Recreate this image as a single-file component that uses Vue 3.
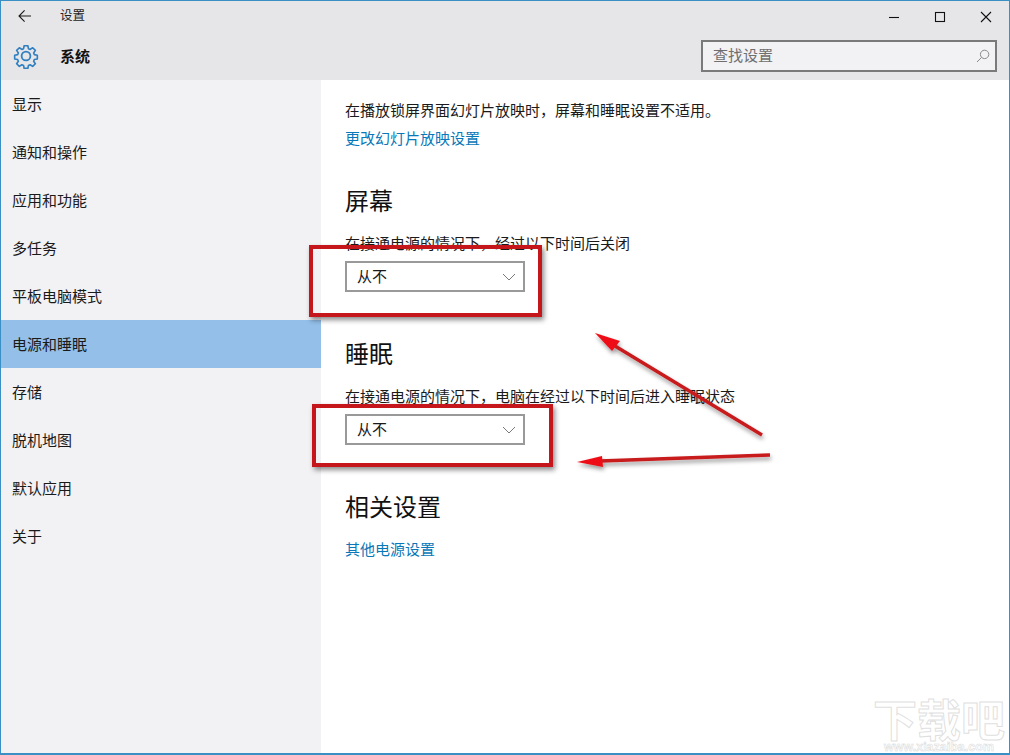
<script setup>
const navItems = ['显示', '通知和操作', '应用和功能', '多任务', '平板电脑模式', '电源和睡眠', '存储', '脱机地图', '默认应用', '关于']
const activeItem = '电源和睡眠'
const sections = [
  { title: '屏幕', caption: '在接通电源的情况下，经过以下时间后关闭', value: '从不' },
  { title: '睡眠', caption: '在接通电源的情况下，电脑在经过以下时间后进入睡眠状态', value: '从不' }
]
</script>

<template>
  <div class="window">
    <header class="header">
      <div class="titlebar">
        <button class="back" aria-label="返回">
          <svg width="14" height="14" viewBox="0 0 14 14" fill="none" stroke="#1a1a1a" stroke-width="1.1">
            <path d="M13 7H1.2M6.6 1.4 1 7l5.6 5.6" />
          </svg>
        </button>
        <span class="app-title">设置</span>
        <div class="controls">
          <span class="control">
            <svg width="12" height="12" viewBox="0 0 12 12" fill="none" stroke="#111" stroke-width="1.1"><path d="M1 6.5h10" /></svg>
          </span>
          <span class="control">
            <svg width="12" height="12" viewBox="0 0 12 12" fill="none" stroke="#111" stroke-width="1.1"><rect x="1.5" y="1.5" width="9" height="9" /></svg>
          </span>
          <span class="control">
            <svg width="12" height="12" viewBox="0 0 12 12" fill="none" stroke="#111" stroke-width="1.1"><path d="M1 1l10 10M11 1 1 11" /></svg>
          </span>
        </div>
      </div>
      <div class="pagebar">
        <svg class="gear" width="26" height="26" viewBox="0 0 26 26" fill="none" stroke="#2f7fc1" stroke-width="1.8" stroke-linejoin="round">
          <path d="M10.9 1.6h4.2l.6 3.3 1.9.8 2.8-1.9 3 3-1.9 2.8.8 1.9 3.3.6v4.2l-3.3.6-.8 1.9 1.9 2.8-3 3-2.8-1.9-1.9.8-.6 3.3h-4.2l-.6-3.3-1.9-.8-2.8 1.9-3-3 1.9-2.8-.8-1.9-3.3-.6v-4.2l3.3-.6.8-1.9-1.9-2.8 3-3 2.8 1.9 1.9-.8z" transform="translate(1.3 1.3) scale(.9)" />
          <circle cx="13" cy="13" r="4.4" />
        </svg>
        <span class="page-title">系统</span>
        <div class="search">
          <span class="search-text">查找设置</span>
          <svg width="14" height="14" viewBox="0 0 14 14" fill="none" stroke="#8a8a8a" stroke-width="1">
            <circle cx="8.6" cy="5.4" r="4.2" />
            <path d="M5.6 8.4 1 13" />
          </svg>
        </div>
      </div>
    </header>

    <div class="body">
      <nav class="nav">
        <div v-for="item in navItems" :key="item" class="nav-item" :class="{ active: item === activeItem }">{{ item }}</div>
      </nav>

      <main class="content">
        <p class="line notice">在播放锁屏界面幻灯片放映时，屏幕和睡眠设置不适用。</p>
        <a class="line link">更改幻灯片放映设置</a>

        <section v-for="s in sections" :key="s.title" class="section">
          <h2 class="heading">{{ s.title }}</h2>
          <p class="caption">{{ s.caption }}</p>
          <div class="select">
            <span class="select-value">{{ s.value }}</span>
            <svg width="14" height="8" viewBox="0 0 14 8" fill="none" stroke="#7a7a7a" stroke-width="1"><path d="M1 1l6 6 6-6" /></svg>
          </div>
        </section>

        <section class="section">
          <h2 class="heading">相关设置</h2>
          <a class="line link related-link">其他电源设置</a>
        </section>
      </main>
    </div>

    <div class="mark mark-a"></div>
    <div class="mark mark-b"></div>
    <svg class="arrows" width="1010" height="755" viewBox="0 0 1010 755">
      <defs>
        <filter id="arrow-shadow" x="-10%" y="-10%" width="120%" height="130%">
          <feDropShadow dx="1" dy="3" stdDeviation="2" flood-color="#000" flood-opacity=".4" />
        </filter>
      </defs>
      <g filter="url(#arrow-shadow)">
        <path d="M762 435 615 346" fill="none" stroke="#c81a1e" stroke-width="3.4" />
        <path d="M595 333 620 341 612 351Z" fill="#ee1118" />
        <path d="M770 455 600 461" fill="none" stroke="#c81a1e" stroke-width="3.4" />
        <path d="M577 462 602 456 603 467Z" fill="#ee1118" />
      </g>
    </svg>

    <div class="watermark">
      <span class="wm-big">下载吧</span>
      <span class="wm-small">www.xiazaiba.com</span>
    </div>
  </div>
</template>

<style>
html, body { margin: 0; padding: 0; background: #fff; }
</style>

<style scoped>
.window {
  position: relative;
  width: 1010px;
  height: 755px;
  box-sizing: border-box;
  border: 1px solid #3a8fc4;
  border-bottom-width: 2px;
  overflow: hidden;
  background: #fff;
  color: #1a1a1a;
  font-family: "Noto Sans CJK SC", "Noto Sans", sans-serif;
  font-size: 15px;
}
.header { background: #e6e6e9; height: 79px; }
.titlebar { display: flex; align-items: center; height: 31px; }
.back {
  display: flex; align-items: center; justify-content: center;
  width: 48px; height: 30px; margin: 0 0 1px; padding: 0;
  border: 0; background: none;
}
.app-title { margin-left: 11px; padding-bottom: 4px; font-size: 12.5px; color: #222; }
.controls { display: flex; margin-left: auto; }
.control { display: flex; align-items: center; justify-content: center; width: 46px; height: 31px; }
.pagebar { display: flex; align-items: center; height: 48px; }
.gear { margin-left: 12px; margin-bottom: 1px; }
.page-title { margin-left: 21px; padding-bottom: 2px; font-weight: 700; color: #111; }
.search {
  display: flex; align-items: center; justify-content: space-between;
  box-sizing: border-box;
  width: 296px; height: 32px;
  margin-left: auto; margin-right: 12px;
  padding: 0 5px 0 10px;
  border: 2px solid #7a7a7a;
  background: #f2f1f4;
}
.search-text { padding-bottom: 3px; color: #6f6f6f; }
.body { display: flex; height: 673px; }
.nav { width: 320px; flex: none; background: #f2f1f4; }
.nav-item { display: flex; align-items: center; height: 48px; padding: 0 0 2px 11px; box-sizing: border-box; }
.nav-item.active { background: #93bfe8; }
.content { flex: 1; padding: 16px 0 0 24px; }
.line { display: block; height: 28px; margin: 0; line-height: 28px; }
.link { color: #0a78b8; text-decoration: none; }
.section { height: 153px; }
.heading { height: 36px; margin: 0; padding-top: 30px; font-size: 24px; font-weight: 400; line-height: 36px; color: #111; }
.caption { height: 24px; margin: 13px 0 0; line-height: 24px; }
.select {
  display: flex; align-items: center; justify-content: space-between;
  box-sizing: border-box;
  width: 180px; height: 31px;
  margin-top: 6px;
  padding: 0 7px 0 10px;
  border: 2px solid #999;
  background: #fff;
}
.select-value { padding-bottom: 3px; }
.related-link { margin-top: 11px; }
.mark {
  position: absolute;
  box-sizing: border-box;
  border: 4px solid #c5161c;
  box-shadow: 2px 3px 5px rgba(0, 0, 0, .45);
}
.mark-a { left: 308px; top: 244px; width: 233px; height: 72px; }
.mark-b { left: 311px; top: 403px; width: 241px; height: 63px; }
.arrows { position: absolute; left: -1px; top: -1px; pointer-events: none; }
.watermark {
  position: absolute; right: 3px; bottom: 0;
  display: flex; flex-direction: column; align-items: center;
  width: 134px; height: 58px;
  pointer-events: none;
}
.wm-big {
  height: 47px;
  font-size: 44px; line-height: 47px; font-weight: 700; letter-spacing: 0;
  color: #fff; -webkit-text-stroke: 1px #dfdfdf; white-space: nowrap;
}
.wm-small {
  height: 11px;
  font-family: "Liberation Sans", sans-serif;
  font-size: 12.5px; line-height: 11px; font-weight: 700;
  color: #fff; -webkit-text-stroke: .5px #d8d8d8;
}
</style>
